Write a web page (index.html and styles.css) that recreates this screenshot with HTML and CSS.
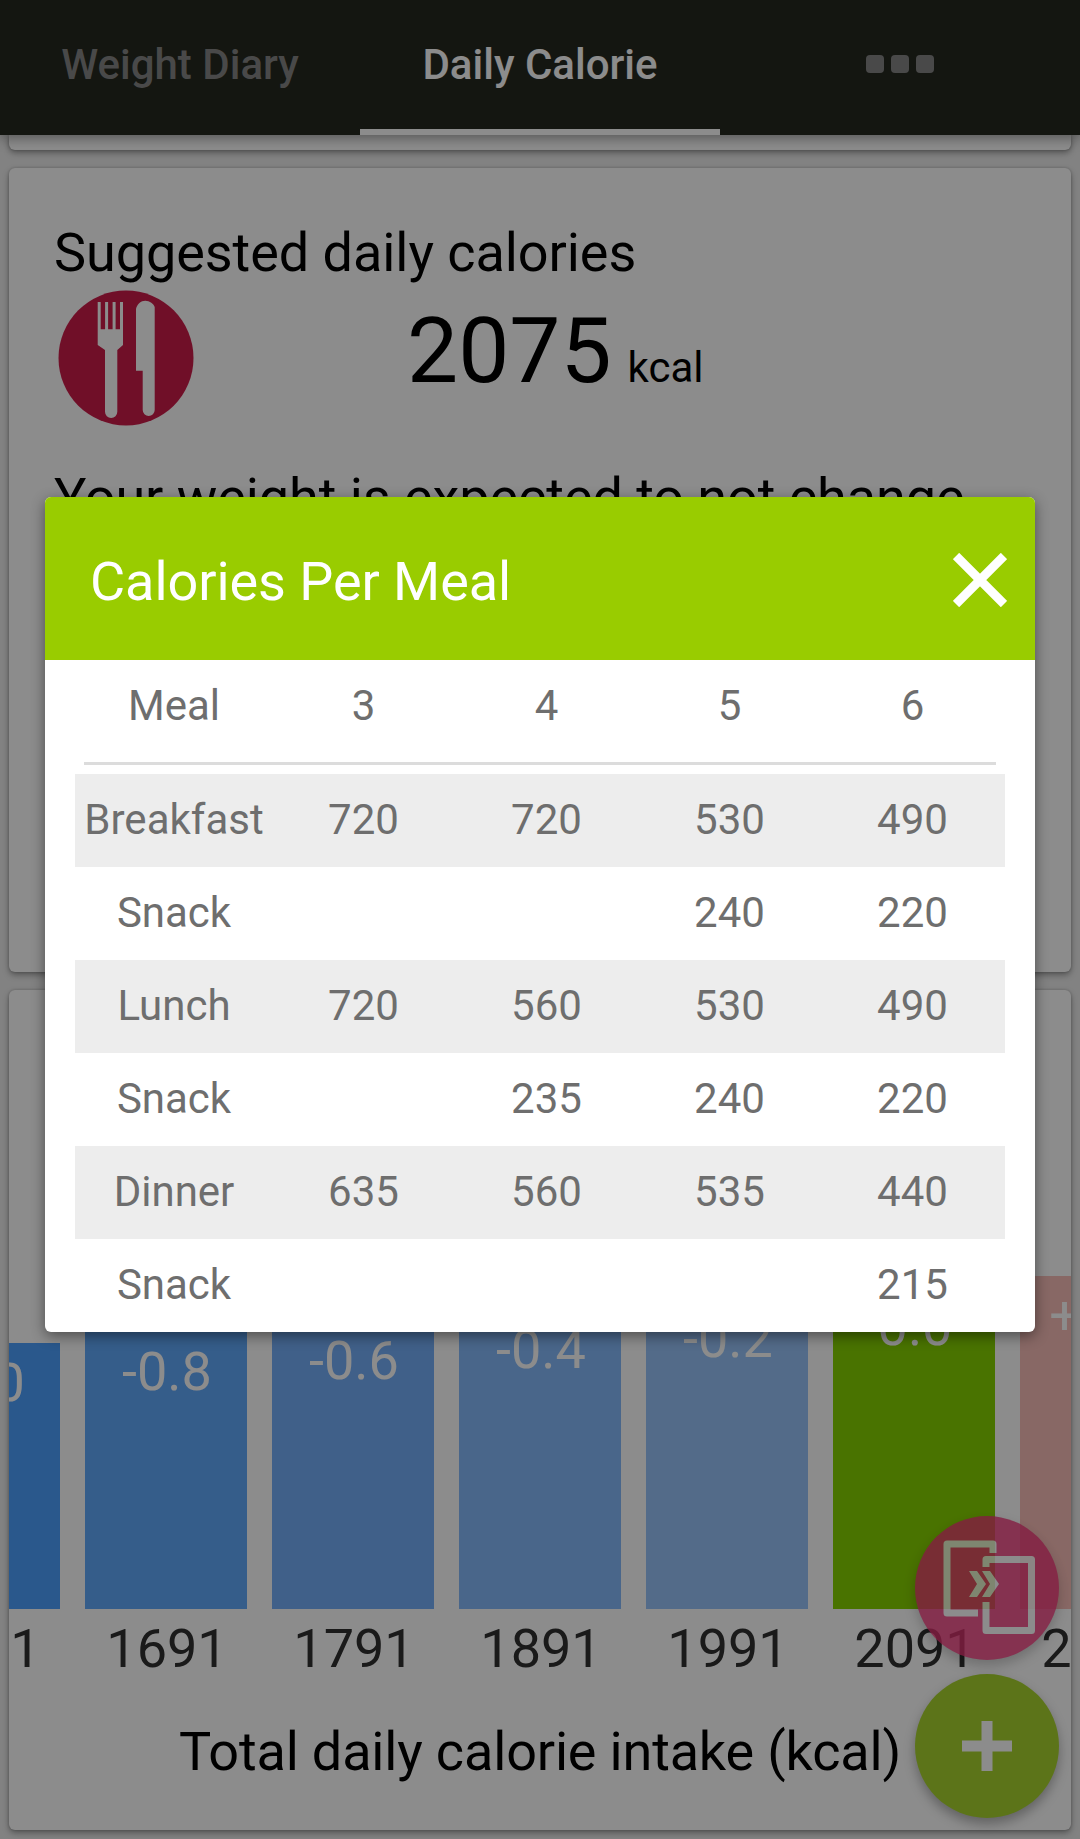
FILE: index.html
```
<!DOCTYPE html>
<html lang="en">

<head>
  <meta charset="utf-8">
  <title>Daily Calorie</title>
  <link rel="stylesheet" href="styles.css">
</head>

<body>
  <nav class="tabs">
    <div class="tab">Weight Diary</div>
    <div class="tab active">Daily Calorie</div>
    <div class="tab more"><i></i><i></i><i></i></div>
  </nav>

  <main class="content">
    <section class="card card-top"></section>

    <section class="card card-suggested">
      <h2>Suggested daily calories</h2>
      <div class="suggested">
        <svg class="meal-icon" width="136" height="136" viewBox="0 0 136 136">
          <circle cx="68" cy="68" r="67.5" fill="#cc1c4a"/>
          <path fill="#fff" d="M39.700 12h3v27.300h4.400V12h3v27.300h4.500V12h3v27.300h4.400V12h3v43l-5.700 5v61.800a6.100 6.100 0 0 1-12.300 0V60l-7.300-5z"/>
          <path fill="#fff" d="M78 80.700V19c1-5 5-8.300 9.300-8.300S96 14 96.700 17v103a6 6 0 0 1-12 0V80.700z"/>
        </svg>
        <div class="kcal"><b>2075</b><span>kcal</span></div>
      </div>
      <p>Your weight is expected to not change</p>
    </section>

    <section class="card card-chart">
      <div class="chart">
        <div class="col"><div class="bar" style="height: 266px; background: #4ea0ff">-1.0</div><span>1591</span></div>
        <div class="col"><div class="bar" style="height: 277px; background: #62a9fc">-0.8</div><span>1691</span></div>
        <div class="col"><div class="bar" style="height: 288px; background: #75affa">-0.6</div><span>1791</span></div>
        <div class="col"><div class="bar" style="height: 299px; background: #86bbfb">-0.4</div><span>1891</span></div>
        <div class="col"><div class="bar" style="height: 310px; background: #97c4f9">-0.2</div><span>1991</span></div>
        <div class="col"><div class="bar" style="height: 322px; background: #86d100">0.0</div><span>2091</span></div>
        <div class="col"><div class="bar" style="height: 333px; background: #f8beb8">+0.2</div><span>2191</span></div>
      </div>
      <div class="axis-title">Total daily calorie intake (kcal)</div>
    </section>
  </main>

  <div class="fabs">
    <div class="fab fab-share">
      <svg width="144" height="144" viewBox="0 0 144 144" fill="none" stroke="#fff" stroke-width="7" stroke-linejoin="round">
        <path d="M78 37V28H32V97H63"/>
        <path d="M71 51V43.500H116.500V114.500H71V86"/>
        <path fill="#fff" stroke="none" d="M54 55h8l9 13-9 13h-8l8-13zM67 55h8l9 13-9 13h-8l8-13z"/>
      </svg>
    </div>
    <div class="fab fab-add">
      <svg width="144" height="144" viewBox="0 0 144 144" fill="#fff">
        <path d="M66.500 47h11v19.500H97v11H77.500V97h-11V77.500H47v-11h19.500z"/>
      </svg>
    </div>
  </div>

  <div class="overlay">
    <div class="dialog">
      <div class="dialog-header">
        <h1>Calories Per Meal</h1>
        <svg class="close" width="54" height="54" viewBox="0 0 54 54" stroke="#fff" stroke-width="9">
          <path d="M3 3l48 48M51 3L3 51"/>
        </svg>
      </div>
      <div class="row head"><span>Meal</span><span>3</span><span>4</span><span>5</span><span>6</span></div>
      <div class="divider"></div>
      <div class="row odd"><span>Breakfast</span><span>720</span><span>720</span><span>530</span><span>490</span></div>
      <div class="row"><span>Snack</span><span></span><span></span><span>240</span><span>220</span></div>
      <div class="row odd"><span>Lunch</span><span>720</span><span>560</span><span>530</span><span>490</span></div>
      <div class="row"><span>Snack</span><span></span><span>235</span><span>240</span><span>220</span></div>
      <div class="row odd"><span>Dinner</span><span>635</span><span>560</span><span>535</span><span>440</span></div>
      <div class="row"><span>Snack</span><span></span><span></span><span></span><span>215</span></div>
    </div>
  </div>
</body>

</html>
```
FILE: styles.css
```
* {
  box-sizing: border-box;
}

body {
  margin: 0;
  height: 1839px;
  overflow: hidden;
  position: relative;
  background-color: #ededed;
  color: #000;
  font-family: Roboto, "Liberation Sans", sans-serif;
}

h1, h2, p {
  margin: 0;
  font-weight: 400;
  font-size: 54px;
  line-height: 64px;
  letter-spacing: -0.06px;
}

/* Tabs */
.tabs {
  display: grid;
  grid-template-columns: repeat(3, 1fr);
  height: 135px;
  background-color: #252820;
  box-shadow: 0 3px 12px rgba(0, 0, 0, 0.4);
  position: relative;
  z-index: 1;
}

.tab {
  display: flex;
  justify-content: center;
  align-items: center;
  border-bottom: 6px solid transparent;
  color: #868686;
  font-size: 42px;
  font-weight: 500;
}

.tab.active {
  color: #fff;
  border-bottom-color: #fff;
}

.more {
  gap: 7px;
  padding-bottom: 1px;
}

.more i {
  width: 18px;
  height: 18px;
  border-radius: 4px;
  background-color: #868686;
}

/* Cards */
.content {
  display: flex;
  flex-direction: column;
  gap: 18px;
  padding: 0 9px;
}

.card {
  background-color: #fff;
  border-radius: 6px;
  box-shadow: 0 3px 6px rgba(0, 0, 0, 0.35), 0 0 3px rgba(0, 0, 0, 0.2);
}

.card-top {
  height: 15px;
  border-radius: 0 0 6px 6px;
}

.card-suggested {
  height: 804px;
  padding: 53px 45px 0;
}

.suggested {
  display: flex;
  height: 181px;
  padding: 5px 0 0 4px;
}

.kcal {
  display: flex;
  align-items: baseline;
  margin-left: 213px;
  padding-top: 1px;
  font-size: 42px;
}

.kcal b {
  font-size: 91px;
  font-weight: 400;
  line-height: 120px;
}

.kcal span {
  margin-left: 16px;
}

/* Chart */
.card-chart {
  display: flex;
  flex-direction: column;
  justify-content: flex-end;
  height: 840px;
  padding-bottom: 46px;
  overflow: hidden;
}

.chart {
  display: flex;
  align-items: flex-end;
  gap: 25px;
  margin-left: -111px;
}

.col {
  flex: none;
  width: 162px;
  text-align: center;
  font-size: 54px;
  line-height: 64px;
}

.bar {
  padding: 8px 0 0 2px;
  color: #fff;
}

.col span {
  display: block;
  padding: 8px 0 0 2px;
  color: #303030;
}

.axis-title {
  margin-top: 39px;
  font-size: 54px;
  line-height: 64px;
  letter-spacing: -0.17px;
  text-align: center;
}

/* Floating buttons */
.fabs {
  position: absolute;
  right: 21px;
  bottom: 21px;
  display: flex;
  flex-direction: column;
  gap: 14px;
}

.fab {
  width: 144px;
  height: 144px;
  border-radius: 50%;
}

.fab svg {
  display: block;
}

.fab-share {
  background-color: #f03478;
  box-shadow: 0 6px 12px rgba(0, 0, 0, 0.25);
  opacity: 0.8;
}

.fab-add {
  background-color: #a8d42e;
  box-shadow: 0 6px 12px rgba(0, 0, 0, 0.3);
}

/* Dialog */
.overlay {
  position: absolute;
  inset: 0;
  z-index: 2;
  padding: 497px 45px 0;
  background-color: rgba(0, 0, 0, 0.45);
}

.dialog {
  height: 835px;
  overflow: hidden;
  border-radius: 6px;
  background-color: #fff;
  box-shadow: 0 4px 14px rgba(0, 0, 0, 0.45);
}

.dialog-header {
  display: flex;
  justify-content: space-between;
  align-items: center;
  height: 163px;
  padding: 3px 28px 0 45px;
  background-color: #99cc00;
  color: #fff;
}

.dialog-header h1 {
  padding-top: 3px;
}

.row {
  display: grid;
  grid-template-columns: 197px repeat(4, 183px);
  height: 93px;
  margin: 0 30px;
  color: #6e6e6e;
  font-size: 42px;
  line-height: 91px;
  text-align: center;
}

.row span:first-child {
  padding-left: 1px;
}

.head {
  height: 102px;
}

.odd {
  background-color: #ededed;
}

.divider {
  height: 3px;
  margin: 0 39px 9px;
  background-color: #dcdcdc;
}
```
